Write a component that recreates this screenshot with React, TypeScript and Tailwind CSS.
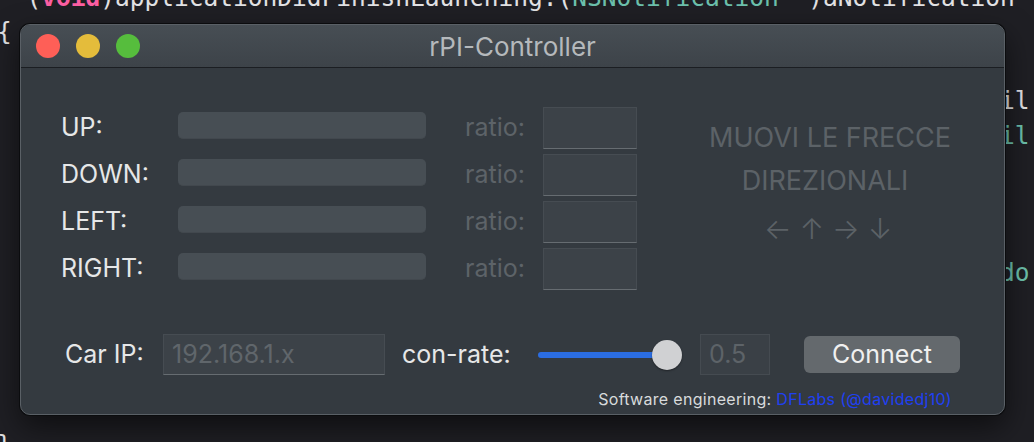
import React from 'react';

const directions = ['UP:', 'DOWN:', 'LEFT:', 'RIGHT:'];

const pad = (n: number) => ' '.repeat(n);

// editor text behind the window
const CodeBehind = () => (
  <div className="-ml-[3px] -mt-[19px] font-['DejaVu_Sans_Mono','Liberation_Mono',monospace] text-[24.5px] leading-[34.4px] text-[#e2e2e4] whitespace-pre">
    <div>
      - (<span className="text-[#fc5fa3] font-bold">void</span>)applicationDidFinishLaunching:(
      <span className="text-[#6cc0ac]">NSNotification</span> *)aNotification
    </div>
    <div>{'{'}</div>
    <div>{pad(1)}</div>
    <div>{pad(68)}il</div>
    <div>
      {pad(68)}
      <span className="text-[#6cc0ac]">il</span>
    </div>
    <div>{pad(1)}</div>
    <div>{pad(1)}</div>
    <div>{pad(1)}</div>
    <div>
      {pad(68)}
      <span className="text-[#6cc0ac]">do</span>
    </div>
    <div>{pad(1)}</div>
    <div>{pad(1)}</div>
    <div>{pad(1)}</div>
    <div>{pad(1)}</div>
    <div>{'}'}</div>
  </div>
);

const DirectionRow = ({ label }: { label: string }) => (
  <div className="flex items-center h-[42px]">
    <div className="w-[117px] text-[25px] text-[#e6e7e8]">{label}</div>
    <div className="w-[248px] h-[27px] mb-[5px] rounded-[5px] bg-[#474e54] border-b border-[#42484e]" />
    <div className="ml-[39px] w-[78px] text-[25px] text-[#5d6368]">ratio:</div>
    <div className="w-[94px] h-[42px] bg-[#3c4248] border border-[#464c52] border-b-[#666c71]" />
  </div>
);

const Slider = () => (
  <div className="relative w-[144px] h-[30px] flex items-center">
    <div className="h-[6px] w-[134px] rounded-full bg-[#2b6de2]" />
    <div className="absolute right-0 top-0 w-[30px] h-[30px] rounded-full bg-[#d0d1d3] shadow-[0_1px_2px_rgba(0,0,0,0.4)]" />
  </div>
);

const Window = () => (
  <div className="absolute left-[20px] top-[24px] w-[985px] h-[391px] rounded-[10px] border border-[#5a6066] bg-[#343a40] shadow-[0_0_0_1px_#0b0c0e,0_12px_30px_rgba(0,0,0,0.55)] overflow-hidden font-['Inter','Noto_Sans',sans-serif]">
    {/* Title bar */}
    <div className="grid grid-cols-[1fr_auto_1fr] items-center h-[43px] bg-gradient-to-b from-[#474e54] to-[#3d4349] border-b border-[#1b1e22]">
      <div className="flex gap-[16px] pl-[15px]">
        <div className="w-[24px] h-[24px] rounded-full bg-[#fe5f57]" />
        <div className="w-[24px] h-[24px] rounded-full bg-[#e4bc3b]" />
        <div className="w-[24px] h-[24px] rounded-full bg-[#56bd3d]" />
      </div>
      <div className="text-[26px] text-[#b5b9bc]">rPI-Controller</div>
      <div />
    </div>

    {/* Body */}
    <div className="pt-[39px] pl-[40px]">
      <div className="flex">
        <div className="flex flex-col gap-[5px]">
          {directions.map((d) => (
            <DirectionRow key={d} label={d} />
          ))}
        </div>
        <div className="ml-[33px] w-[320px] pt-[8px] text-center text-[27px] leading-[45px] text-[#5c6267]">
          <div>MUOVI LE FRECCE</div>
          <div className="-mt-[2px] pr-[10px]">DIREZIONALI</div>
          <div className="mt-[3px] pr-[4px] text-[29px] font-light">← ↑ → ↓</div>
        </div>
      </div>

      <div className="flex items-center h-[41px] mt-[44px] ml-[4px]">
        <div className="w-[98px] text-[25px] text-[#e6e7e8]">Car IP:</div>
        <div className="w-[222px] h-[41px] flex items-center px-[8px] bg-[#3c4248] border border-[#464c52] border-b-[#666c71] text-[25px] text-[#60666b]">
          192.168.1.x
        </div>
        <div className="ml-[17px] w-[136px] text-[25px] text-[#e6e7e8]">con-rate:</div>
        <Slider />
        <div className="ml-[18px] w-[70px] h-[41px] flex items-center px-[8px] bg-[#3a4046] border border-[#454b51] text-[25px] text-[#5d6368]">
          0.5
        </div>
        <button className="ml-[34px] w-[156px] h-[37px] rounded-[6px] bg-[#64696d] text-[25px] text-[#f0f0f0]">
          Connect
        </button>
      </div>

      <div className="mt-[14px] pr-[52px] text-right text-[16px] leading-[20px] tracking-[0.3px]">
        <span className="text-[#d8dadc]">Software engineering: </span>
        <span className="text-[#1f40f2]">DFLabs (@davidedj10)</span>
      </div>
    </div>
  </div>
);

const App = () => {
  return (
    <div className="relative w-[1034px] h-[442px] overflow-hidden bg-[#1f1f24]">
      <CodeBehind />
      <Window />
    </div>
  );
};

export default App;
